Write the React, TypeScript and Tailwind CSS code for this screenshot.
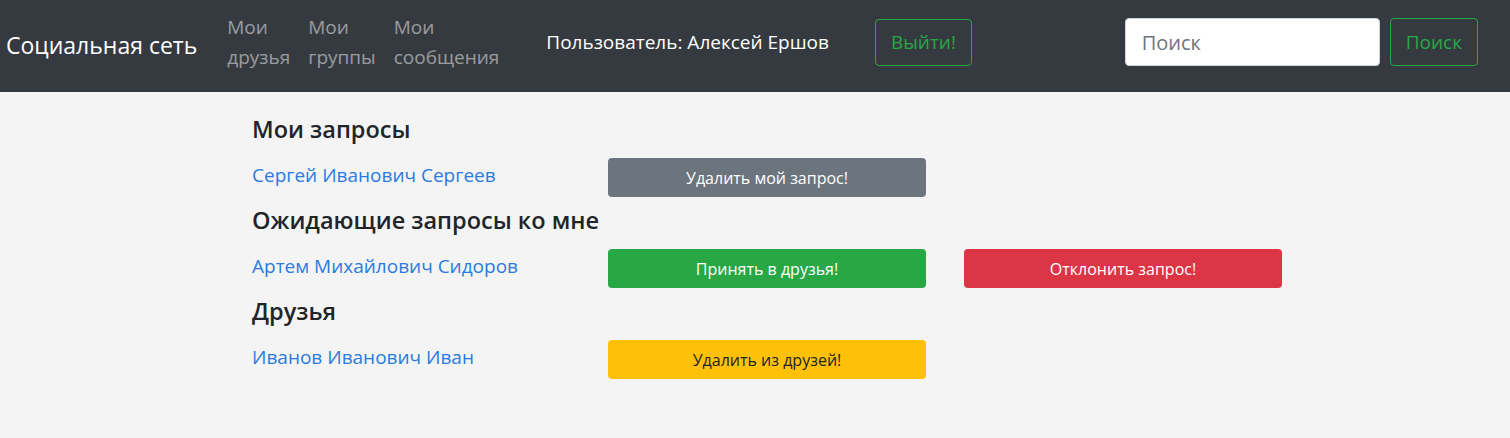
const font = { fontFamily: '"Open Sans", "Noto Sans", sans-serif' };

const navLinks = [
  ['Мои', 'друзья'],
  ['Мои', 'группы'],
  ['Мои', 'сообщения'],
];

type Row = { name: string; actions: { label: string; className: string }[] };

const sections: { title: string; rows: Row[] }[] = [
  {
    title: 'Мои запросы',
    rows: [
      {
        name: 'Сергей Иванович Сергеев',
        actions: [{ label: 'Удалить мой запрос!', className: 'bg-[#6c757d] text-white' }],
      },
    ],
  },
  {
    title: 'Ожидающие запросы ко мне',
    rows: [
      {
        name: 'Артем Михайлович Сидоров',
        actions: [
          { label: 'Принять в друзья!', className: 'bg-[#28a745] text-white' },
          { label: 'Отклонить запрос!', className: 'bg-[#dc3545] text-white' },
        ],
      },
    ],
  },
  {
    title: 'Друзья',
    rows: [
      {
        name: 'Иванов Иванович Иван',
        actions: [{ label: 'Удалить из друзей!', className: 'bg-[#ffc107] text-[#212529]' }],
      },
    ],
  },
];

export default function App() {
  return (
    <div style={font} className="min-h-[438px] bg-[#f4f4f4]">
      {/* Navbar */}
      <nav className="flex h-[92px] items-center bg-[#343a40] pb-[8px] pl-[6px] pr-[32px]">
        <a href="#" className="mt-[5px] text-[23px] leading-[30px] text-white">
          Социальная сеть
        </a>
        <div className="ml-[21px] flex">
          {navLinks.map(([a, b]) => (
            <a key={b} href="#" className="px-[9px] text-[19px] leading-[30px] text-white/50">
              {a}
              <br />
              {b}
            </a>
          ))}
        </div>
        <span className="ml-[38px] text-[19px] leading-[30px] text-white">Пользователь: Алексей Ершов</span>
        <button className="ml-[46px] h-[47px] rounded-[4px] border border-[#28a745] px-[15px] text-[19px] text-[#28a745]">
          Выйти!
        </button>
        <div className="ml-auto flex items-center">
          <input
            placeholder="Поиск"
            className="h-[48px] w-[255px] rounded-[4px] border border-[#ced4da] bg-white px-[16px] text-[20px] text-[#495057] outline-none placeholder:text-[#6c757d]"
          />
          <button className="ml-[10px] h-[48px] rounded-[4px] border border-[#28a745] px-[15px] text-[19px] text-[#28a745]">
            Поиск
          </button>
        </div>
      </nav>

      {/* Content */}
      <main className="pl-[252px] pt-[23px]">
        {sections.map((s) => (
          <section key={s.title} className="mb-[9px]">
            <h4 className="mb-[14px] text-[23.5px] font-semibold leading-[29px] text-[#212529]">{s.title}</h4>
            {s.rows.map((r) => (
              <div key={r.name} className="grid grid-cols-[318px_318px_318px] gap-x-[38px]">
                <a href="#" className="pt-[4px] text-[19px] leading-[26px] text-[#2a7ae2]">
                  {r.name}
                </a>
                {r.actions.map((act) => (
                  <button
                    key={act.label}
                    className={`h-[39px] rounded-[4px] text-[16px] ${act.className}`}
                  >
                    {act.label}
                  </button>
                ))}
              </div>
            ))}
          </section>
        ))}
      </main>
    </div>
  );
}
